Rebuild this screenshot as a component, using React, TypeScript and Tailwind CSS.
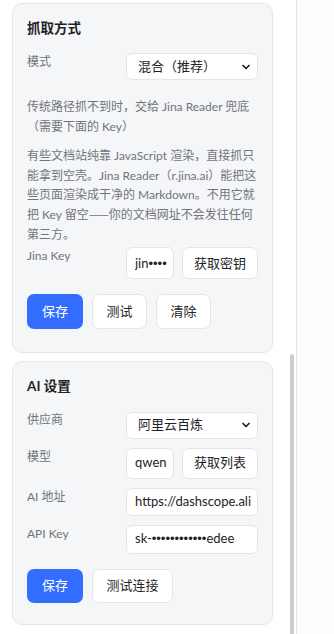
import { ChevronDown } from 'lucide-react'

const font = '[font-family:Lato,"Noto_Sans_CJK_SC",sans-serif]'
const cjk = '[font-family:"Noto_Sans_CJK_SC",sans-serif]'

function Label({ children }: { children: React.ReactNode }) {
  return <div className="w-[91px] shrink-0 text-[12px] leading-[18px] text-[#70757c]">{children}</div>
}

function Select({ value }: { value: string }) {
  return (
    <div className="relative flex-1">
      <select
        value={value}
        onChange={() => {}}
        className="h-[27px] w-full appearance-none rounded-[6px] border border-[#e3e5e9] bg-white pl-[11px] text-[13px] text-[#1f2328] outline-none"
      >
        <option>{value}</option>
      </select>
      <ChevronDown size={12} strokeWidth={3.5} className="pointer-events-none absolute right-[6px] top-[8px] text-[#222]" />
    </div>
  )
}

// read-only field; masked dots use Arial-width bullets like the original
function Field({ text, dots = 0, tail = '', className = '' }: { text: string; dots?: number; tail?: string; className?: string }) {
  return (
    <div className={`flex items-center rounded-[6px] border border-[#e3e5e9] bg-white pl-[8px] pr-[6px] text-[13px] text-[#1f2328] ${className}`}>
      <div className="min-w-0 flex-1 overflow-hidden whitespace-nowrap">
        {text}
        {dots > 0 && <span className='[font-family:"Liberation_Sans",sans-serif]'>{'•'.repeat(dots)}</span>}
        {tail}
      </div>
    </div>
  )
}

function Button({ children, primary, className = '' }: { children: React.ReactNode; primary?: boolean; className?: string }) {
  return (
    <button
      className={
        primary
          ? `whitespace-nowrap rounded-[7px] bg-[#336dff] text-[13px] text-white ${className}`
          : `whitespace-nowrap rounded-[7px] border border-[#e3e5e9] bg-white text-[13px] text-[#1f2328] ${className}`
      }
    >
      {children}
    </button>
  )
}

function Card({ title, children, className = '' }: { title: string; children: React.ReactNode; className?: string }) {
  return (
    <div className={`w-[261px] rounded-[10px] border border-[#e4e6ea] bg-[#f5f6f8] px-[14px] pt-[14px] ${className}`}>
      <div className="mb-[15px] text-[13.5px] font-bold leading-5 text-[#1f2328]">{title}</div>
      {children}
    </div>
  )
}

export default function App() {
  return (
    <div className={`flex h-[634px] w-[334px] overflow-hidden bg-white ${font}`}>
      <div className="flex w-[290px] shrink-0 flex-col gap-2 pl-3 pt-[3px]">
        <Card title="抓取方式" className="pb-[23px]">
          <div className="flex gap-2">
            <Label>模式</Label>
            <Select value="混合（推荐）" />
          </div>
          <p className="mt-[17px] text-[12px] leading-[19.5px] text-[#70757c]">
            <span className="block whitespace-nowrap">传统路径抓不到时，交给 Jina Reader 兜底</span>
            <span className="block whitespace-nowrap">（需要下面的 Key）</span>
          </p>
          <p className="mt-[10px] text-[12px] leading-[19.4px] text-[#70757c]">
            <span className="block whitespace-nowrap">有些文档站纯靠 JavaScript 渲染，直接抓只</span>
            <span className="block whitespace-nowrap">能拿到空壳。Jina Reader（r.jina.ai）能把这</span>
            <span className="block whitespace-nowrap">些页面渲染成干净的 Markdown。不用它就</span>
            <span className="block whitespace-nowrap">
              把 Key 留空<span className={cjk}>——</span>你的文档网址不会发往任何
            </span>
            <span className="block whitespace-nowrap">第三方。</span>
          </p>
          <div className="mt-[3px] flex gap-2">
            <Label>Jina Key</Label>
            <div className="flex flex-1 gap-2">
              <Field text="jin" dots={8} className="h-[32px] w-[48px] shrink-0" />
              <Button className="h-[32px] flex-1">获取密钥</Button>
            </div>
          </div>
          <div className="mt-[15px] flex gap-[9px]">
            <Button primary className="h-[35px] w-[56px]">保存</Button>
            <Button className="h-[35px] w-[55px]">测试</Button>
            <Button className="h-[35px] w-[55px]">清除</Button>
          </div>
        </Card>

        <Card title="AI 设置" className="pb-[21px]">
          <div className="flex flex-col gap-[9px]">
            <div className="flex gap-2">
              <Label>供应商</Label>
              <Select value="阿里云百炼" />
            </div>
            <div className="flex gap-2">
              <Label>模型</Label>
              <div className="flex flex-1 gap-2">
                <Field text="qwen3-max" className="h-[31px] w-[48px] shrink-0" />
                <Button className="h-[31px] flex-1">获取列表</Button>
              </div>
            </div>
            <div className="flex gap-2">
              <Label>AI 地址</Label>
              <Field text="https://dashscope.aliyuncs.com/compatible-mode/v1" className="h-[28px] min-w-0 flex-1" />
            </div>
            <div className="flex gap-2">
              <Label>API Key</Label>
              <Field text="sk-" dots={12} tail="edee" className="h-[29px] min-w-0 flex-1" />
            </div>
          </div>
          <div className="mt-[15px] flex gap-[9px]">
            <Button primary className="h-[34px] w-[56px]">保存</Button>
            <Button className="h-[34px] w-[81px]">测试连接</Button>
          </div>
        </Card>
      </div>

      <div className="flex w-[6px] shrink-0 flex-col pt-[354px]">
        <div className="w-[4px] flex-1 rounded-t-[2px] bg-[#cdcdcd]" />
      </div>
      <div className="w-px shrink-0 bg-[#e6e6e6]" />
      <div className="flex-1 bg-[#fdfdfd]" />
    </div>
  )
}
